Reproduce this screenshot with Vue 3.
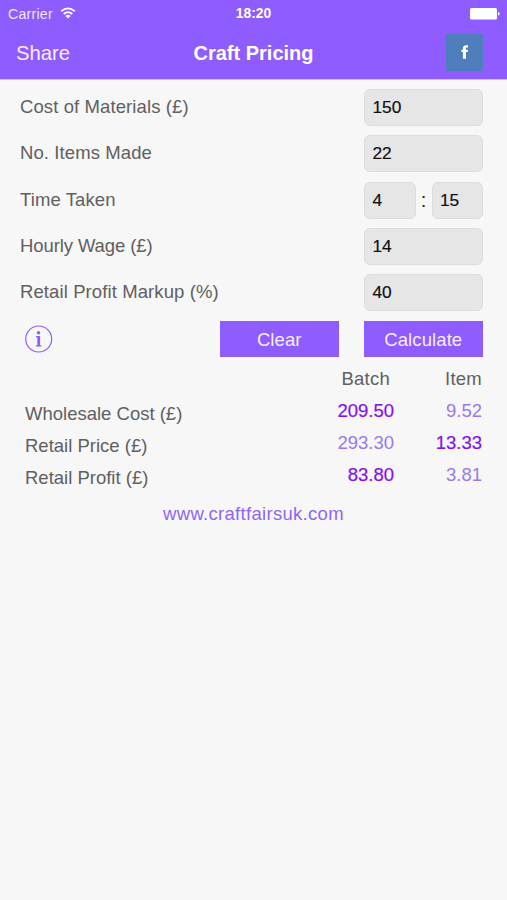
<template>
  <div class="app">
    <header class="header">
      <div class="status">
        <div class="carrier">
          <span>Carrier</span>
          <svg class="wifi" viewBox="0 0 16 12" width="16" height="12">
            <path d="M1.2 4.3Q8 -1.5 14.8 4.3" fill="none" stroke="#fff" stroke-width="1.8" />
            <path d="M3.7 7Q8 3.2 12.3 7" fill="none" stroke="#fff" stroke-width="1.8" />
            <path d="M5.4 8.9Q8 6.8 10.6 8.9L8 11.6Z" fill="#fff" />
          </svg>
        </div>
        <span class="clock">18:20</span>
        <svg class="battery" viewBox="0 0 30 12" width="30" height="12">
          <rect x="0" y="0" width="27" height="11.6" rx="1.6" fill="#fff" />
          <path d="M28 4q1.7 0 1.7 1.8T28 7.6Z" fill="#fff" />
        </svg>
      </div>
      <nav class="nav">
        <span class="share">Share</span>
        <h1 class="title">Craft Pricing</h1>
        <a class="facebook">
          <svg viewBox="0 0 8 14" width="8" height="14">
            <path d="M7 .3H5.3C3.1 .3 1.9 1.4 1.9 3.4V4.8H.4V7H1.9V13.7H4.9V7H6.6L7 4.8H4.9V3.7C4.9 2.9 5.2 2.6 5.9 2.6H7Z" fill="#fff" />
          </svg>
        </a>
      </nav>
    </header>

    <main class="form">
      <div v-for="f in fields" :key="f.label" class="row">
        <label class="label" :class="{ tight: f.tight }">{{ f.label }}</label>
        <div class="inputs">
          <template v-for="(v, i) in f.values" :key="i">
            <span v-if="i > 0" class="colon">:</span>
            <div class="input">{{ v }}</div>
          </template>
        </div>
      </div>
    </main>

    <div class="actions">
      <svg class="info" viewBox="0 0 28 28" width="28" height="28">
        <circle cx="13.7" cy="14" r="13" fill="none" stroke="#8f5cff" stroke-width="1.2" />
        <circle cx="13.5" cy="7.8" r="1.7" fill="#8f5cff" />
        <path d="M11 11.1H15.1V20.2H16.5V21.4H10.9V20.2H12.3V12.3H11Z" fill="#8f5cff" />
      </svg>
      <div class="btn">Clear</div>
      <div class="btn">Calculate</div>
    </div>

    <section class="results">
      <div class="names">
        <span v-for="r in results" :key="r.name">{{ r.name }}</span>
      </div>
      <div class="col batch">
        <span class="head">Batch</span>
        <span v-for="r in results" :key="r.name" :class="{ strong: r.strong === 'batch' }">{{ r.batch }}</span>
      </div>
      <div class="col item">
        <span class="head">Item</span>
        <span v-for="r in results" :key="r.name" :class="{ strong: r.strong === 'item' }">{{ r.item }}</span>
      </div>
    </section>

    <a class="link">www.craftfairsuk.com</a>
  </div>
</template>

<script setup>
const fields = [
  { label: 'Cost of Materials (£)', values: ['150'] },
  { label: 'No. Items Made', values: ['22'] },
  { label: 'Time Taken', values: ['4', '15'] },
  { label: 'Hourly Wage (£)', values: ['14'], tight: true },
  { label: 'Retail Profit Markup (%)', values: ['40'] }
]

const results = [
  { name: 'Wholesale Cost (£)', batch: '209.50', item: '9.52', strong: 'batch' },
  { name: 'Retail Price (£)', batch: '293.30', item: '13.33', strong: 'item' },
  { name: 'Retail Profit (£)', batch: '83.80', item: '3.81', strong: 'batch' }
]
</script>

<style>
body {
  margin: 0;
  background: #f7f7f7;
}
</style>

<style scoped>
.app {
  box-sizing: border-box;
  width: 507px;
  height: 900px;
  background: #f7f7f7;
  color: #606060;
  font-family: "Liberation Sans", Arial, sans-serif;
  font-size: 18.5px;
  overflow: hidden;
}

.header {
  height: 79px;
  background: #8f5cff;
  border-bottom: 1px solid #d9b8fa;
  color: #fff;
}

.status {
  display: grid;
  grid-template-columns: 1fr auto 1fr;
  align-items: center;
  height: 27px;
  padding: 0 7px;
  font-size: 14px;
}
.carrier {
  display: flex;
  align-items: center;
  gap: 7px;
  padding-left: 1px;
  color: #f1e5ff;
  letter-spacing: 0.3px;
}
.wifi {
  margin-bottom: 2px;
}
.clock {
  font-weight: bold;
  font-size: 13.8px;
}
.battery {
  justify-self: end;
}

.nav {
  display: grid;
  grid-template-columns: 1fr auto 1fr;
  align-items: center;
  height: 50px;
  padding: 0 24px;
}
.share {
  margin: 2px 0 0 -8px;
  font-size: 20.3px;
  color: #f6edff;
}
.title {
  margin: 2px 0 0;
  font-size: 20px;
  font-weight: bold;
}
.facebook {
  display: flex;
  align-items: center;
  justify-content: center;
  justify-self: end;
  width: 37px;
  height: 37px;
  background: #507dbc;
}

.form {
  display: flex;
  flex-direction: column;
  gap: 9.25px;
  padding: 9px 24px 0 20px;
}
.row {
  display: flex;
  align-items: center;
  justify-content: space-between;
  height: 37px;
}
.label {
  padding-bottom: 1px;
  letter-spacing: 0.1px;
}
.label.tight {
  letter-spacing: -0.1px;
}
.inputs {
  display: flex;
  align-items: center;
  width: 119px;
}
.input {
  flex: 1;
  box-sizing: border-box;
  height: 37px;
  padding-left: 7.5px;
  border: 1px solid #dcdcdc;
  border-radius: 6px;
  background: #e6e6e6;
  color: #111;
  font-size: 17.3px;
  line-height: 35px;
  -webkit-text-stroke: 0.2px #111;
}
.colon {
  width: 16px;
  color: #222;
  font-size: 20px;
  text-align: center;
}

.actions {
  display: flex;
  align-items: center;
  gap: 25.5px;
  padding: 10px 24.5px 0 25px;
}
.info {
  margin-right: auto;
}
.btn {
  width: 118.5px;
  height: 36px;
  background: #8f5cff;
  color: #f6edff;
  line-height: 37px;
  text-align: center;
  letter-spacing: 0.1px;
}

.results {
  display: flex;
  padding: 6px 25px 0;
  line-height: 32px;
}
.names,
.col {
  display: flex;
  flex-direction: column;
}
.names {
  flex: 1;
  padding-top: 35px;
}
.col {
  align-items: flex-end;
  color: #9a78f0;
}
.item {
  width: 88px;
}
.head {
  color: #606060;
  letter-spacing: 0.25px;
}
.batch .head {
  margin-right: 4px;
}
.strong {
  color: #8410f0;
  -webkit-text-stroke: 0.2px #8410f0;
}

.link {
  display: block;
  margin-top: 4px;
  color: #8f66f5;
  line-height: 32px;
  text-align: center;
  letter-spacing: 0.3px;
}
</style>
